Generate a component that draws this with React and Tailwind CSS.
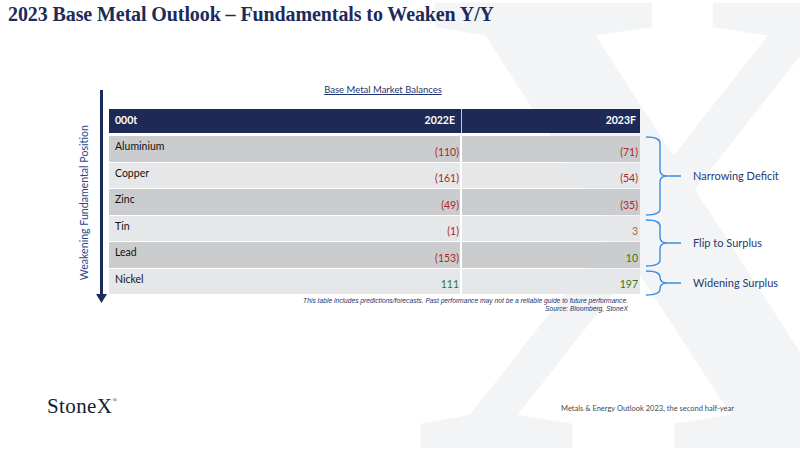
import React from "react";

const rows = [
  { metal: "Aluminium", a: "(110)", aTone: "red", b: "(71)", bTone: "red", dark: true },
  { metal: "Copper", a: "(161)", aTone: "red", b: "(54)", bTone: "red", dark: false },
  { metal: "Zinc", a: "(49)", aTone: "red", b: "(35)", bTone: "red", dark: true },
  { metal: "Tin", a: "(1)", aTone: "red", b: "3", bTone: "brown", dark: false },
  { metal: "Lead", a: "(153)", aTone: "red", b: "10", bTone: "green", dark: true },
  { metal: "Nickel", a: "111", aTone: "green", b: "197", bTone: "green", dark: false },
];

const tones = {
  red: "text-[#b01f2a]",
  green: "text-[#2f7a14]",
  brown: "text-[#a8693c]",
};

const groups = [
  { label: "Narrowing Deficit", h: 80 },
  { label: "Flip to Surplus", h: 48 },
  { label: "Widening Surplus", h: 26 },
];

// curly brace, opening on the left, tip pointing right
const Brace = ({ h }) => {
  const m = h / 2;
  const d = `M1 1 Q15 1 15 7 L15 ${m - 6} Q15 ${m} 22 ${m} L36 ${m} M22 ${m} Q15 ${m} 15 ${m + 6} L15 ${h - 7} Q15 ${h - 1} 1 ${h - 1}`;
  return (
    <svg width="40" height={h} viewBox={`0 0 40 ${h}`} className="shrink-0">
      <path d={d} fill="none" stroke="#3a8ee6" strokeWidth="1.4" />
    </svg>
  );
};

const App = () => {
  return (
    <div className="relative w-[800px] h-[450px] overflow-hidden bg-white font-['Lato',sans-serif]">
      {/* watermark */}
      <span className="absolute left-[408px] top-[-121px] text-[680px] font-bold leading-none text-[#f3f4f6] font-['Liberation_Serif',serif] select-none">
        X
      </span>

      <div className="relative flex flex-col h-full">
        <h1 className="pl-2 pt-[1px] h-[84px] text-[20px] font-bold leading-[26px] text-[#1c2b5a] font-['Liberation_Serif',serif] tracking-[-0.1px]">
          2023 Base Metal Outlook – Fundamentals to Weaken Y/Y
        </h1>

        <div className="flex pl-[78px]">
          {/* vertical label */}
          <div className="w-[14px] mt-[24px] h-[190px] flex items-center justify-center">
            <span className="[writing-mode:vertical-rl] rotate-180 whitespace-nowrap text-[10.6px] text-[#2c4789]">
              Weakening Fundamental Position
            </span>
          </div>

          {/* arrow */}
          <div className="ml-[4px] w-[11px] mt-[6px] flex flex-col items-center">
            <div className="w-[3px] h-[204px] bg-[#1d2a5c]" />
            <svg width="11" height="9" viewBox="0 0 11 9">
              <polygon points="0,0 11,0 5.5,9" fill="#1d2a5c" />
            </svg>
          </div>

          {/* table block */}
          <div className="ml-[2px] w-[531px] flex flex-col">
            <div className="h-[12px] pl-[17px] text-center text-[9.5px] leading-[12px] text-[#1f3470] underline">
              Base Metal Market Balances
            </div>
            <div className="mt-[13px] grid grid-cols-[176px_175px_176px] gap-x-[2px] h-[24px] bg-[#1e2a55] text-white text-[10.5px] font-bold">
              <div className="pl-[6px] flex items-center">000t</div>
              <div className="pr-[6px] flex items-center justify-end border-r border-[#c4c8d4]">2022E</div>
              <div className="pr-[4px] flex items-center justify-end">2023F</div>
            </div>
            <div className="mt-[3px] flex flex-col gap-y-[1px]">
              {rows.map((r) => (
                <div
                  key={r.metal}
                  className={`grid grid-cols-[176px_175px_176px] gap-x-[2px] h-[25.5px] text-[10.5px] ${r.dark ? "bg-[#cbccce]" : "bg-[#e6e7e9]"}`}
                >
                  <div className="pl-[6px] pt-[3px] text-[#111]">{r.metal}</div>
                  <div className={`pr-[1px] flex items-end justify-end pb-[1px] border-r-2 border-white ${tones[r.aTone]}`}>{r.a}</div>
                  <div className={`pr-[2px] flex items-end justify-end pb-[1px] ${tones[r.bTone]}`}>{r.b}</div>
                </div>
              ))}
            </div>
            <div className="mt-[3px] pr-[12px] text-right italic text-[6.7px] leading-[8px] text-[#22336a] font-['Liberation_Sans',sans-serif]">
              <p>This table includes predictions/forecasts. Past performance may not be a reliable guide to future performance.</p>
              <p>Source: Bloomberg, StoneX</p>
            </div>
          </div>

          {/* braces */}
          <div className="ml-[5px] mt-[52px] flex flex-col gap-[3px]">
            {groups.map((g) => (
              <div key={g.label} className="flex items-center">
                <Brace h={g.h} />
                <span className="ml-[8px] text-[11px] text-[#27396f] whitespace-nowrap">{g.label}</span>
              </div>
            ))}
          </div>
        </div>

        <div className="mt-auto h-[60px] flex items-start justify-between pl-[47px] pr-[66px]">
          <div className="pt-[1px] text-[21px] text-[#181c30] font-['Liberation_Serif',serif] tracking-[0.4px]">
            StoneX<sup className="text-[6px] align-super">®</sup>
          </div>
          <div className="pt-[13px] text-[7.5px] text-[#4a4a4a]">
            Metals &amp; Energy Outlook 2023, the second half-year
          </div>
        </div>
      </div>
    </div>
  );
};

export default App;
